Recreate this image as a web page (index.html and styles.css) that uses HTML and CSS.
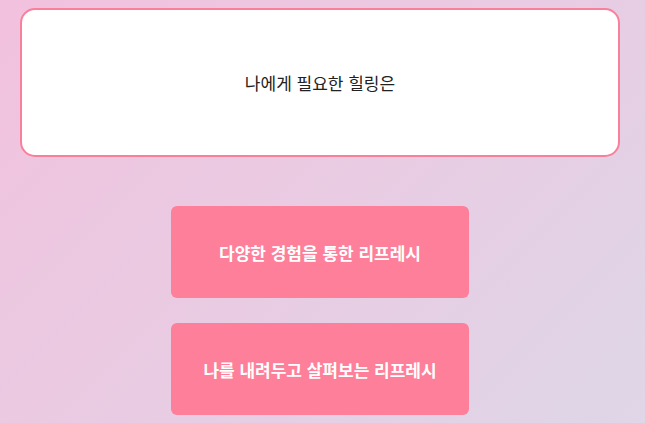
FILE: index.html
```html
<!DOCTYPE html>
<html lang="ko">
<head>
    <meta charset="UTF-8">
    <meta name="viewport" content="width=device-width, initial-scale=1.0">
    <title>힐링 테스트</title>
    <link rel="stylesheet" href="styles.css">
</head>
<body>

    <div class="quiz">
        <div class="question">
            <p>나에게 필요한 힐링은</p>
        </div>

        <div class="answers">
            <button class="answer" type="button">다양한 경험을 통한 리프레시</button>
            <button class="answer" type="button">나를 내려두고 살펴보는 리프레시</button>
        </div>
    </div>

</body>
</html>
```

FILE: styles.css
```css
html, body {
    height: 100%;
}
body {
    margin: 0;
    font-family: "Noto Sans CJK KR", "Noto Sans", sans-serif;
    background: linear-gradient(135deg, #f2c1dd 0%, #dfd6e8 100%);
    overflow: hidden;
}
.quiz {
    width: 600px;
    margin: 8px 20px 0;
}
.question {
    height: 145px;
    box-sizing: content-box;
    border: 2px solid #fa7f9a;
    border-radius: 15px;
    background: #fff;
    display: flex;
    align-items: center;
    justify-content: center;
}
.question p {
    margin: 0;
    font-size: 17px;
    color: #222;
}
.answers {
    display: flex;
    flex-direction: column;
    align-items: center;
    gap: 25px;
    margin-top: 49px;
}
.answer {
    width: 298px;
    height: 92px;
    border: none;
    border-radius: 6px;
    background-color: #fe7f9a;
    color: #fff;
    font-family: inherit;
    font-size: 17px;
    font-weight: bold;
    cursor: pointer;
}
```
